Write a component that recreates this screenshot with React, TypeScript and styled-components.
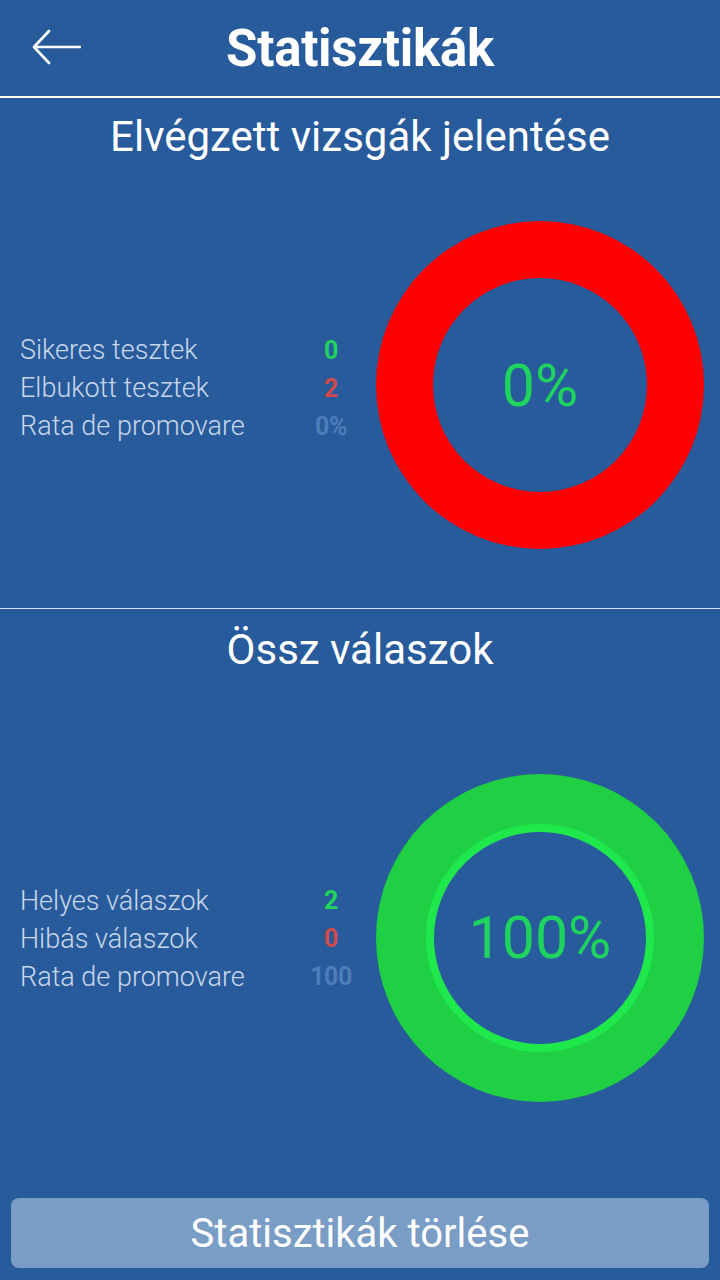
import styled, { createGlobalStyle } from "styled-components";

const GlobalStyle = createGlobalStyle`
  html, body {
    margin: 0;
    padding: 0;
    background: #285b9b;
  }
  * {
    box-sizing: border-box;
  }
`;

const Page = styled.div`
  width: 720px;
  height: 1280px;
  display: flex;
  flex-direction: column;
  background: #285b9b;
  font-family: Roboto, "Noto Sans", sans-serif;
  color: #ffffff;
  overflow: hidden;
`;

const Header = styled.header`
  height: 98px;
  flex-shrink: 0;
  display: flex;
  align-items: center;
  justify-content: center;
  position: relative;
  border-bottom: 2px solid #ffffff;
`;

const BackButton = styled.button`
  position: absolute;
  left: 28px;
  top: 24px;
  width: 56px;
  height: 46px;
  padding: 0;
  border: 0;
  background: transparent;
  cursor: pointer;
  display: flex;
  align-items: center;
  justify-content: center;
`;

const Title = styled.h1`
  margin: 0;
  font-size: 51px;
  font-weight: 700;
  letter-spacing: -0.3px;
  line-height: 1;
  padding-bottom: 0;
`;

const Section = styled.section<{ $grow?: boolean }>`
  display: flex;
  flex-direction: column;
  height: ${(p) => (p.$grow ? "auto" : "511px")};
  flex: ${(p) => (p.$grow ? "1" : "0 0 auto")};
  border-bottom: ${(p) => (p.$grow ? "none" : "1px solid #d4e0ee")};
`;

const SectionTitle = styled.h2<{ $top: number }>`
  margin: 0;
  padding-top: ${(p) => p.$top}px;
  text-align: center;
  font-size: 42px;
  font-weight: 400;
  letter-spacing: 0;
  line-height: 50px;
`;

const Body = styled.div<{ $shift: number }>`
  flex: 1;
  display: flex;
  align-items: center;
  padding: ${(p) => p.$shift}px 16px 0 20px;
`;

const Stats = styled.div<{ $drop: number }>`
  flex: 1;
  display: grid;
  grid-template-columns: 270px 82px;
  grid-auto-rows: 38px;
  align-items: center;
  margin-top: ${(p) => p.$drop}px;
`;

const Label = styled.span`
  font-size: 27px;
  font-weight: 300;
  color: #c9d7ea;
  white-space: nowrap;
`;

const Value = styled.span<{ $color: string }>`
  font-size: 25px;
  font-weight: 700;
  text-align: center;
  color: ${(p) => p.$color};
  letter-spacing: -0.5px;
`;

const Donut = styled.div<{ $color: string }>`
  width: 328px;
  height: 328px;
  flex-shrink: 0;
  border-radius: 50%;
  background: ${(p) => p.$color};
  display: flex;
  align-items: center;
  justify-content: center;
`;

const Hole = styled.div<{ $ring?: string }>`
  width: ${(p) => (p.$ring ? 228 : 214)}px;
  height: ${(p) => (p.$ring ? 228 : 214)}px;
  border-radius: 50%;
  background: #285b9b;
  border: ${(p) => (p.$ring ? `8px solid ${p.$ring}` : "none")};
  display: flex;
  align-items: center;
  justify-content: center;
`;

const Percent = styled.span`
  font-size: 59px;
  font-weight: 400;
  color: #1ed35e;
  line-height: 1;
`;

const Footer = styled.div`
  flex-shrink: 0;
  padding: 8px 11px 12px;
`;

const ClearButton = styled.button`
  width: 100%;
  height: 70px;
  border: 0;
  border-radius: 8px;
  background: #7a9dc5;
  color: #ffffff;
  font-family: Roboto, "Noto Sans", sans-serif;
  font-size: 40px;
  font-weight: 400;
  cursor: pointer;
`;

const GREEN = "#1fd35c";
const RED = "#d24a4a";
const BLUE = "#4d7dbb";

export default function App() {
  return (
    <Page>
      <GlobalStyle />
      <Header>
        <BackButton aria-label="Vissza">
          <svg width="50" height="38" viewBox="0 0 50 38" fill="none">
            <path
              d="M49 19H3M18 3L3 19L18 35"
              stroke="#ffffff"
              strokeWidth="2.6"
              strokeLinecap="round"
              strokeLinejoin="round"
            />
          </svg>
        </BackButton>
        <Title>Statisztikák</Title>
      </Header>

      <Section>
        <SectionTitle $top={14}>Elvégzett vizsgák jelentése</SectionTitle>
        <Body $shift={0}>
          <Stats $drop={6}>
            <Label>Sikeres tesztek</Label>
            <Value $color={GREEN}>0</Value>
            <Label>Elbukott tesztek</Label>
            <Value $color={RED}>2</Value>
            <Label>Rata de promovare</Label>
            <Value $color={BLUE}>0%</Value>
          </Stats>
          <Donut $color="#ff0000">
            <Hole>
              <Percent>0%</Percent>
            </Hole>
          </Donut>
        </Body>
      </Section>

      <Section $grow>
        <SectionTitle $top={16}>Össz válaszok</SectionTitle>
        <Body $shift={10}>
          <Stats $drop={2}>
            <Label>Helyes válaszok</Label>
            <Value $color={GREEN}>2</Value>
            <Label>Hibás válaszok</Label>
            <Value $color={RED}>0</Value>
            <Label>Rata de promovare</Label>
            <Value $color={BLUE}>100</Value>
          </Stats>
          <Donut $color="#1fcf44">
            <Hole $ring="#1ee84c">
              <Percent>100%</Percent>
            </Hole>
          </Donut>
        </Body>
      </Section>

      <Footer>
        <ClearButton>Statisztikák törlése</ClearButton>
      </Footer>
    </Page>
  );
}
